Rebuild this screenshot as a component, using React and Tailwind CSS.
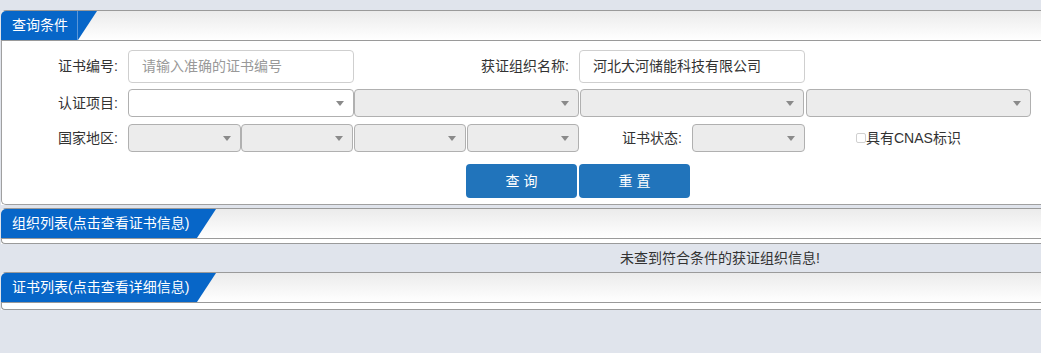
import React from "react";

const font = { fontFamily: '"Liberation Sans", "Noto Sans CJK SC", sans-serif' };

function Arrow() {
  return (
    <span className="w-0 h-0 border-l-[4px] border-r-[4px] border-t-[5px] border-l-transparent border-r-transparent border-t-[#8a8a8a]" />
  );
}

function Select({ w, white, extra = "" }) {
  return (
    <div
      className={`h-[28px] ${w} ${extra} shrink-0 rounded-[4px] border border-[#b0b0b0] ${
        white ? "bg-white" : "bg-[#ececec]"
      } flex items-center justify-end pr-[9px]`}
    >
      <Arrow />
    </div>
  );
}

function Header({ title, tabW, line }) {
  return (
    <div className="h-[30px] flex bg-linear-to-b from-[#ebebeb] to-white border-b border-[#9a9a9a]">
      <div
        className={`${tabW} shrink-0 bg-[#0766c8] text-white text-[14px] flex items-center pl-[11px] rounded-tl-[5px] ${
          line ? "border-r border-[#5a96d8]" : ""
        }`}
      >
        {title}
      </div>
      <div className="w-[19px] shrink-0 bg-[#0766c8] [clip-path:polygon(0_0,100%_0,0_100%)]" />
    </div>
  );
}

function Label({ w, children }) {
  return (
    <div className={`${w} shrink-0 text-right pr-[10px] text-[14px] text-[#333]`}>{children}</div>
  );
}

export default function App() {
  return (
    <div className="min-h-screen bg-[#e0e4ec] pt-[10px] overflow-hidden" style={font}>
      {/* Panel 1 */}
      <div className="ml-[1px] border-t border-[#9a9a9a] rounded-tl-[5px] bg-white">
        <Header title="查询条件" tabW="w-[77px]" line />
        <div className="border-l border-b border-[#a0a0a0] rounded-bl-[5px] pt-[9px] pb-[6px]">
          {/* Row 1 */}
          <div className="flex items-center h-[33px]">
            <Label w="w-[126px]">证书编号:</Label>
            <div className="w-[226px] h-[33px] shrink-0 rounded-[4px] border border-[#cfcfcf] flex items-center pl-[13px] text-[14px] text-[#999]">
              请输入准确的证书编号
            </div>
            <Label w="w-[225px]">获证组织名称:</Label>
            <div className="w-[226px] h-[33px] shrink-0 rounded-[4px] border border-[#cfcfcf] flex items-center pl-[13px] text-[14px] text-[#333]">
              河北大河储能科技有限公司
            </div>
          </div>
          {/* Row 2 */}
          <div className="flex items-center h-[28px] mt-[6px]">
            <Label w="w-[126px]">认证项目:</Label>
            <div className="flex">
              <Select w="w-[226px]" white />
              <Select w="w-[225px]" />
              <Select w="w-[224px]" extra="ml-[1px]" />
              <Select w="w-[225px]" extra="ml-[2px]" />
            </div>
          </div>
          {/* Row 3 */}
          <div className="flex items-center h-[28px] mt-[7px]">
            <Label w="w-[126px]">国家地区:</Label>
            <div className="flex">
              <Select w="w-[113px]" />
              <Select w="w-[112px]" />
              <Select w="w-[112px]" extra="ml-[1px]" />
              <Select w="w-[112px]" extra="ml-[1px]" />
            </div>
            <Label w="w-[113px]">证书状态:</Label>
            <Select w="w-[113px]" />
            <div className="ml-[51px] flex items-center text-[14px] text-[#333]">
              <span className="w-[10px] h-[10px] border border-[#d0d0d0] rounded-[2px] bg-white" />
              <span>具有CNAS标识</span>
            </div>
          </div>
          {/* Buttons */}
          <div className="flex mt-[12px] pl-[464px] gap-[2px]">
            <button className="w-[111px] h-[34px] rounded-[4px] bg-[#2174bb] text-white text-[14px]">
              查 询
            </button>
            <button className="w-[111px] h-[34px] rounded-[4px] bg-[#2174bb] text-white text-[14px]">
              重 置
            </button>
          </div>
        </div>
      </div>

      {/* Panel 2 */}
      <div className="ml-[1px] mt-[3px] border-t border-[#9a9a9a] rounded-tl-[5px] bg-white">
        <Header title="组织列表(点击查看证书信息)" tabW="w-[196px]" />
        <div className="h-[5px] border-l border-b border-[#9a9a9a] rounded-bl-[4px]" />
      </div>

      <div className="h-[28px] flex items-center pl-[620px] text-[14px] text-[#333]">
        未查到符合条件的获证组织信息!
      </div>

      {/* Panel 3 */}
      <div className="ml-[1px] border-t border-[#9a9a9a] rounded-tl-[5px] bg-white">
        <Header title="证书列表(点击查看详细信息)" tabW="w-[196px]" />
        <div className="h-[7px] border-l border-b border-[#9a9a9a] rounded-bl-[4px]" />
      </div>
    </div>
  );
}
